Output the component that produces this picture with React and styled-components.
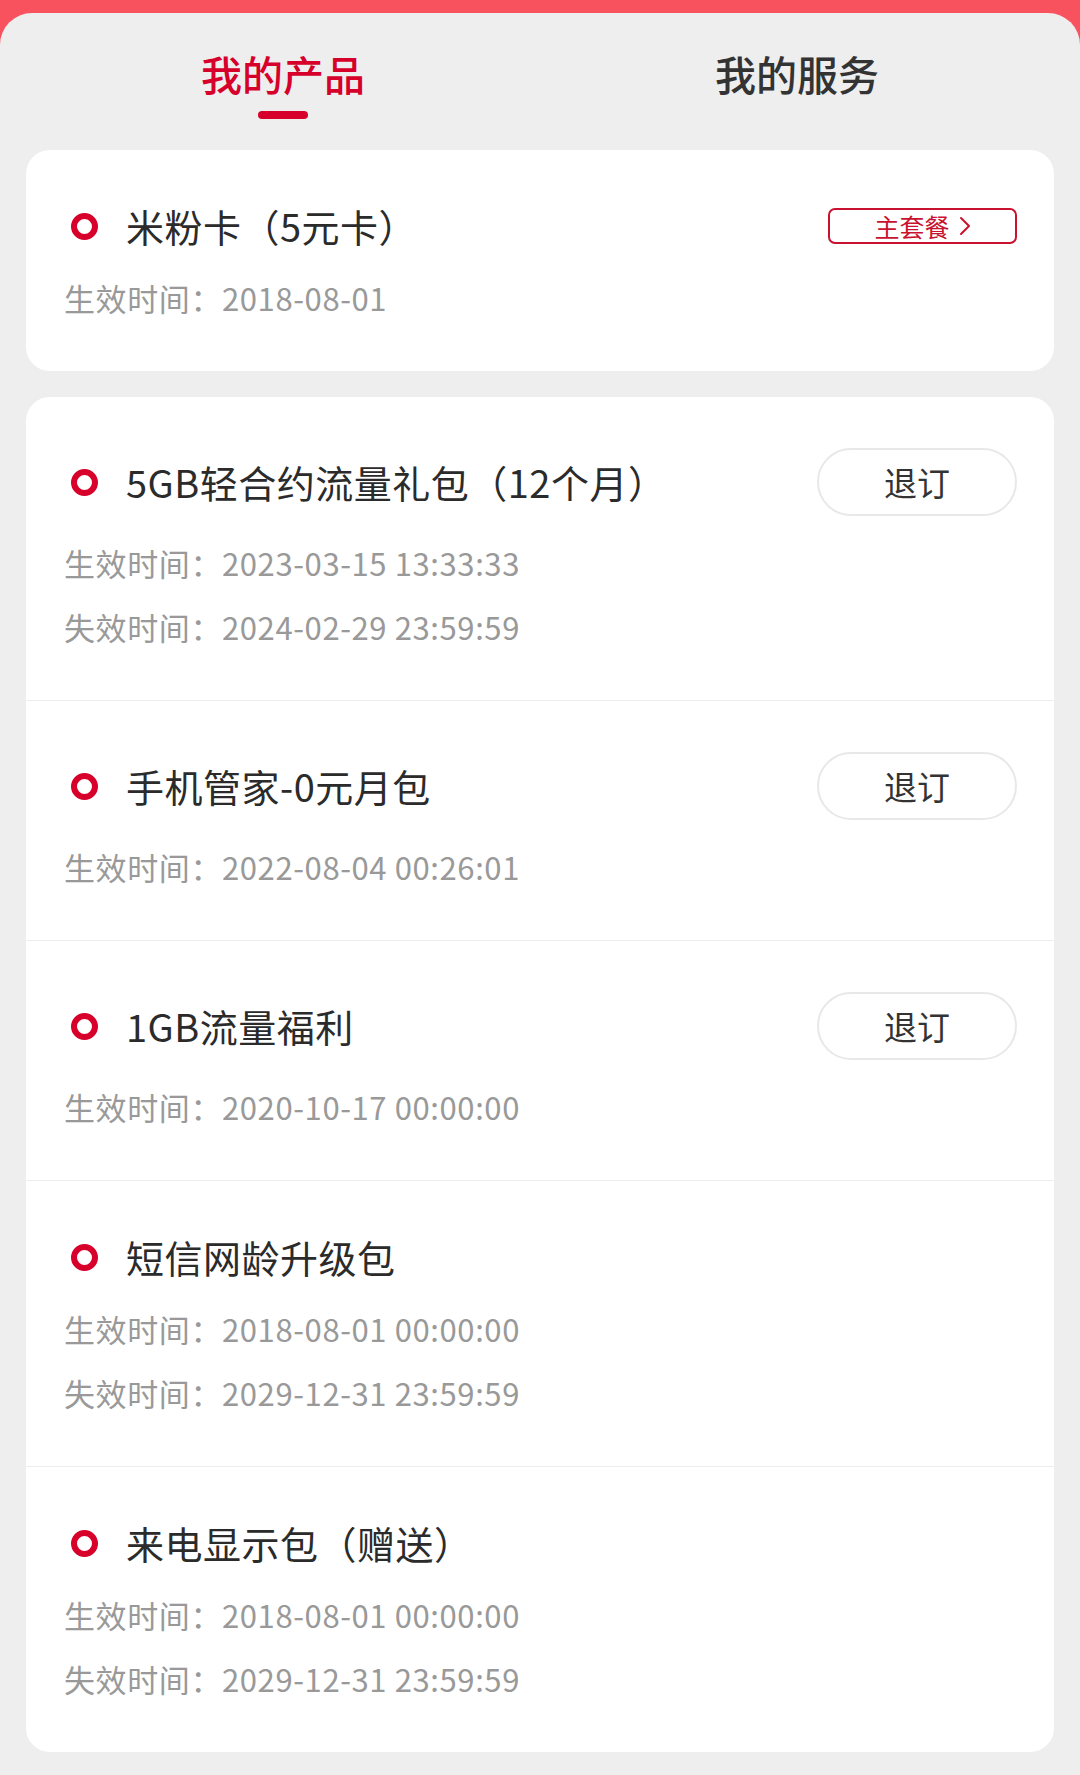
import React from 'react';
import styled, { createGlobalStyle } from 'styled-components';

const GlobalStyle = createGlobalStyle`
   html, body {
      margin: 0;
      padding: 0;
      background: #f8505e;
   }
   * {
      box-sizing: border-box;
   }
`;

const colors = {
   red: '#d6002b',
   tagRed: '#c8122f',
   text: '#2b2b2b',
   gray: '#999999',
   panel: '#eeeeee',
   line: '#ededed',
};

const Page = styled.div`
   min-height: 1775px;
   padding-top: 13px;
   background: linear-gradient(180deg, #f9525f 0%, #f84c5b 100%);
   font-family: "Noto Sans CJK SC", "Noto Sans", sans-serif;
`;

const Panel = styled.div`
   min-height: 1762px;
   background: ${colors.panel};
   border-radius: 32px 32px 0 0;
   padding: 0 26px 20px;
`;

const Tabs = styled.div`
   display: grid;
   grid-template-columns: 1fr 1fr;
   padding: 32px 0 31px;
`;

const Tab = styled.div`
   display: flex;
   flex-direction: column;
   align-items: center;
   cursor: pointer;
`;

const TabLabel = styled.span`
   font-size: 41px;
   line-height: 56px;
   font-weight: 500;
   color: ${p => (p.$active ? colors.red : '#333333')};
`;

const TabBar = styled.span`
   width: 50px;
   height: 8px;
   margin-top: 10px;
   border-radius: 4px;
   background: ${p => (p.$active ? colors.red : 'transparent')};
`;

const Card = styled.div`
   background: #ffffff;
   border-radius: 24px;
   overflow: hidden;
   & + & {
      margin-top: 26px;
   }
`;

const Item = styled.div`
   padding: 51px 37px 41px 38px;
   & + & {
      border-top: 1px solid ${colors.line};
   }
`;

const TitleRow = styled.div`
   display: flex;
   align-items: center;
   min-height: 50px;
`;

const Dot = styled.span`
   flex-shrink: 0;
   width: 27px;
   height: 27px;
   margin: 0 28px 0 7px;
   border: 6px solid ${colors.red};
   border-radius: 50%;
`;

const Title = styled.div`
   flex: 1;
   font-size: 38px;
   letter-spacing: 0.5px;
   line-height: 50px;
   color: ${colors.text};
   white-space: nowrap;
`;

const Tag = styled.div`
   display: flex;
   align-items: center;
   justify-content: center;
   gap: 9px;
   width: 189px;
   height: 36px;
   border: 2px solid ${colors.tagRed};
   border-radius: 7px;
   color: ${colors.tagRed};
   font-size: 25px;
   line-height: 1;
`;

const UnsubscribeButton = styled.button`
   flex-shrink: 0;
   width: 200px;
   height: 68px;
   border: 2px solid #e8e8e8;
   border-radius: 34px;
   background: #ffffff;
   color: #333333;
   font-family: inherit;
   font-size: 33px;
   padding: 0;
`;

const Dates = styled.div`
   margin-top: 15px;
`;

const DateLine = styled.div`
   font-size: 31px;
   letter-spacing: 0.6px;
   line-height: 64px;
   color: ${colors.gray};
   white-space: nowrap;
`;

const Chevron = () => (
   <svg width="12" height="20" viewBox="0 0 12 20" fill="none">
      <path d="M2 2 L10 10 L2 18" stroke={colors.tagRed} strokeWidth="2" strokeLinecap="round" strokeLinejoin="round" />
   </svg>
);

const mainPlan = {
   name: '米粉卡（5元卡）',
   dates: ['生效时间：2018-08-01'],
};

const products = [
   {
      name: '5GB轻合约流量礼包（12个月）',
      dates: ['生效时间：2023-03-15 13:33:33', '失效时间：2024-02-29 23:59:59'],
      canUnsubscribe: true,
   },
   {
      name: '手机管家-0元月包',
      dates: ['生效时间：2022-08-04 00:26:01'],
      canUnsubscribe: true,
   },
   {
      name: '1GB流量福利',
      dates: ['生效时间：2020-10-17 00:00:00'],
      canUnsubscribe: true,
   },
   {
      name: '短信网龄升级包',
      dates: ['生效时间：2018-08-01 00:00:00', '失效时间：2029-12-31 23:59:59'],
   },
   {
      name: '来电显示包（赠送）',
      dates: ['生效时间：2018-08-01 00:00:00', '失效时间：2029-12-31 23:59:59'],
   },
];

const ProductItem = ({ name, dates, action }) => (
   <Item>
      <TitleRow>
         <Dot />
         <Title>{name}</Title>
         {action}
      </TitleRow>
      <Dates>
         {dates.map(d => <DateLine key={d}>{d}</DateLine>)}
      </Dates>
   </Item>
);

export default function App() {
   const [tab, setTab] = React.useState(0);

   return (
      <Page>
         <GlobalStyle />
         <Panel>
            <Tabs>
               {['我的产品', '我的服务'].map((label, i) => (
                  <Tab key={label} onClick={() => setTab(i)}>
                     <TabLabel $active={tab === i}>{label}</TabLabel>
                     <TabBar $active={tab === i} />
                  </Tab>
               ))}
            </Tabs>

            <Card>
               <ProductItem
                  name={mainPlan.name}
                  dates={mainPlan.dates}
                  action={<Tag>主套餐<Chevron /></Tag>} />
            </Card>

            <Card>
               {products.map(p => (
                  <ProductItem
                     key={p.name}
                     name={p.name}
                     dates={p.dates}
                     action={p.canUnsubscribe ? <UnsubscribeButton>退订</UnsubscribeButton> : null} />
               ))}
            </Card>
         </Panel>
      </Page>
   );
}
